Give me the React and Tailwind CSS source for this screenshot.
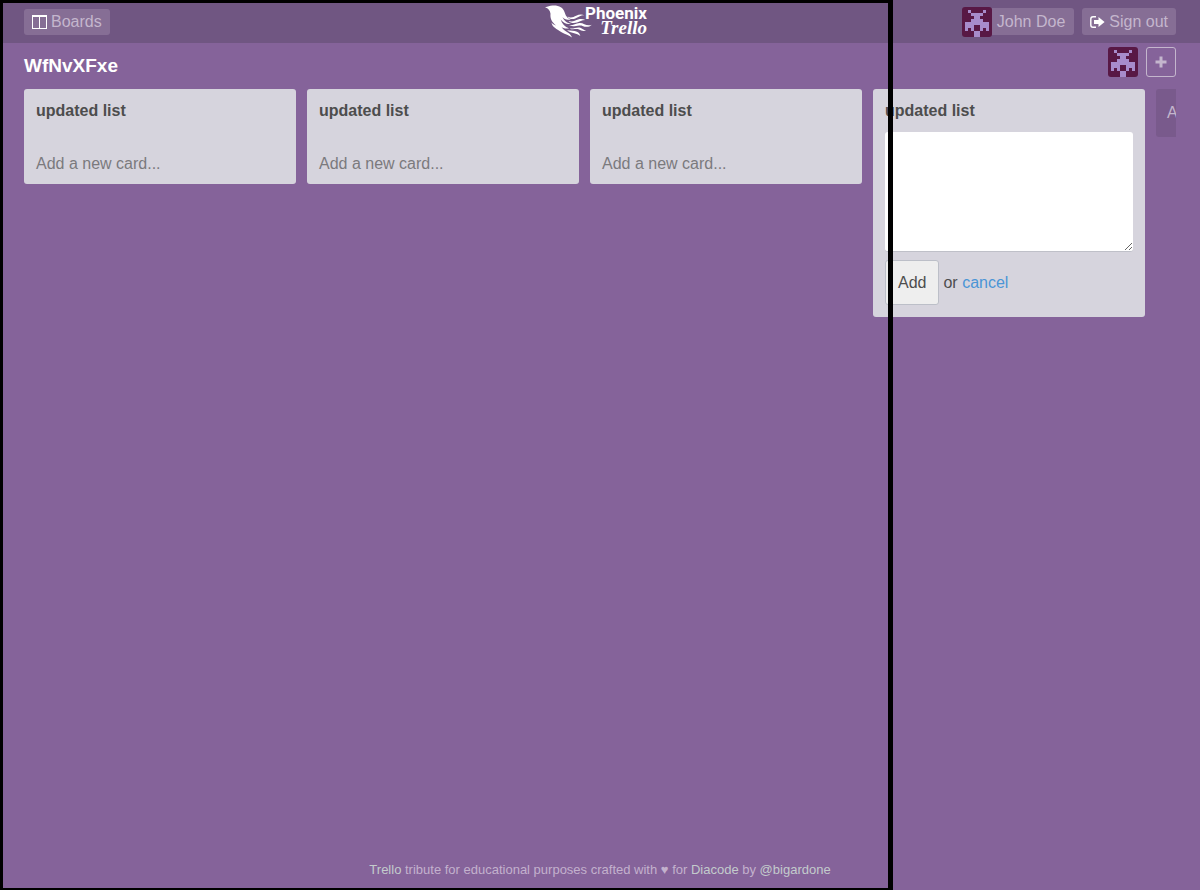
function Avatar() {
  const cells = [
    [2, 1, 1, 1], [7, 1, 1, 1],
    [3, 2, 4, 1],
    [4, 3, 2, 1],
    [3, 4, 4, 1],
    [2, 5, 1, 1], [4, 5, 2, 1], [7, 5, 1, 1],
    [1, 5, 3, 1], [6, 5, 3, 1],
    [1, 6, 3, 1], [6, 6, 3, 1],
    [1, 7, 1, 1], [3, 7, 1, 1], [6, 7, 1, 1], [8, 7, 1, 1],
    [4, 8, 2, 2],
  ];
  return (
    <svg viewBox="0 0 10 10" className="size-[30px] shrink-0 rounded-[3px] bg-[#581845]" shapeRendering="crispEdges" aria-hidden="true">
      {cells.map(([x, y, w, h], i) => (
        <rect key={i} x={x} y={y} width={w} height={h} fill="#a78bcb" />
      ))}
    </svg>
  );
}

function Columns() {
  return (
    <svg viewBox="0 0 15 14" className="h-[14px] w-[15px] shrink-0" fill="#fff" shapeRendering="crispEdges" aria-hidden="true">
      <path fillRule="evenodd" d="M0 0h15v14H0zM1 2v11h6V2zM8 2v11h6V2z" />
    </svg>
  );
}

function SignOut() {
  return (
    <svg viewBox="0 0 15 12" className="h-3 w-[15px] shrink-0" aria-hidden="true">
      <path d="M6 .7H3Q.8.7.8 3v6q0 2.3 2.2 2.3h3" fill="none" stroke="#fff" strokeWidth="1.4" />
      <path d="M4 4h4.500V1L14.600 6 8.500 11V8H4z" fill="#fff" />
    </svg>
  );
}

function Plus() {
  return (
    <svg viewBox="0 0 12 12" className="size-3" fill="currentColor" aria-hidden="true">
      <path d="M4.500 .5h3v4h4v3h-4v4h-3v-4h-4v-3h4z" />
    </svg>
  );
}

function Phoenix() {
  return (
    <svg viewBox="0 0 48 33" className="h-[33px] w-12 shrink-0" fill="#fff" aria-hidden="true">
      <path d="M0 2.200C3 1.800 4.500 .8 7.500 .6c6.500-.4 10.500 2 12 6.400 1.200 3.700 2.500 6.200 6.200 7.200-3.200 1.200-6.300.2-8.200-2.200 1.600 4.200 5 6.300 8.500 6.800-4 1-8-.8-10.300-4.200 1.200 4.400 4.300 7.400 8.300 8.700-2.600.7-5.400 0-7.500-1.400 1.800 3 4.500 4 7 6 2 1.500 2.800 2.700 3.500 4.700-3-3-6.800-3.300-10-5.200C11.500 24 7 22 6.500 17.500c1.500 1.800 3 2.600 4.700 3C6.500 17 5 13 5.500 8.700 5 5.500 3.500 3.200 0 2.200z" />
      <path d="M22.500 11.500c3.500 2 6 .4 8.700-.8 2.800-1.200 5.400-1.500 8.300-.4-4.500 0-6.300 2.200-9.200 3.300-3.200 1.100-6.300.4-7.800-2.100z" />
      <path d="M23.500 16c4 1.300 6.700-.5 9.500-1.400 2.600-.8 5-.6 7.300.4-3.800 0-5.500 1.700-8.300 2.600-3 .9-6.500.6-8.500-1.600z" />
      <path d="M24 20.200c4.200.6 6.500-2 10.500-2.200 4.500-.2 7 3.700 12.300 1.700-3 3-6.500 2.200-9.300 1.200-3.700-1.400-6.500 1.900-13.500-.7z" />
      <path d="M24.500 23.400c4 .7 7.300-1.600 10.800-.7 2.200.6 3.200 2.600 5.900 2.500-2.800 1.500-5 .2-7.200-.7-2.800-1.200-6.500.8-9.500-1.100z" />
      <path d="M22 25.200c4 .6 7.200 0 10 1.600 2 1.100 2.900 2.300 3.300 4.200-3.600-3.400-8.300-2.200-13.300-5.800z" />
    </svg>
  );
}

function List({ children }) {
  return (
    <section className="w-[272px] shrink-0 rounded-[3px] bg-[#d6d4dd] p-3">
      <h4 className="text-base leading-5 font-bold">updated list</h4>
      {children}
    </section>
  );
}

export default function App() {
  return (
    <div className="relative flex min-h-screen flex-col bg-[#85639a] font-['Liberation_Sans',Arial,sans-serif] text-base text-[#4d4d4d]">
      <header className="grid h-[43px] grid-cols-3 items-center bg-[#705682] px-6 text-[#c4b6cd]">
        <nav>
          <a href="#boards" className="inline-flex h-[26px] items-center gap-1 rounded-[3px] bg-[#866e95] px-2 align-middle">
            <Columns />
            Boards
          </a>
        </nav>
        <a href="#home" className="flex items-start justify-self-center pr-2 text-white">
          <Phoenix />
          <span className="-ml-2 flex flex-col items-end">
            <span className="font-['Roboto',sans-serif] text-[17px] leading-4 font-bold">Phoenix</span>
            <span className="font-['Liberation_Serif',serif] text-[19px] leading-[14px] font-bold italic">Trello</span>
          </span>
        </a>
        <div className="flex items-center gap-2 justify-self-end">
          <a href="#profile" className="flex items-center">
            <Avatar />
            <span className="flex h-[27px] items-center rounded-r-[3px] bg-[#866e95] pr-[9px] pl-[5px]">John Doe</span>
          </a>
          <button type="button" className="flex h-[27px] items-center gap-1 rounded-[3px] bg-[#866e95] px-2">
            <SignOut />
            Sign out
          </button>
        </div>
      </header>

      <main className="flex flex-1 flex-col px-6 pt-1">
        <div className="flex h-[42px] items-start justify-between">
          <h3 className="pt-[7px] text-[19px] leading-6 font-bold text-white">WfNvXFxe</h3>
          <div className="flex gap-2">
            <Avatar />
            <button type="button" aria-label="Add member" className="flex size-[30px] items-center justify-center rounded-[3px] border border-[#c4b6cd] text-[#c4b6cd]">
              <Plus />
            </button>
          </div>
        </div>
        <div className="flex items-start gap-[11px] overflow-hidden">
          {[1, 2, 3].map((id) => (
            <List key={id}>
              <a href="#new-card" className="mt-[35px] block leading-4 text-[#7b7a7d]">Add a new card...</a>
            </List>
          ))}
          <List>
            <form className="mt-[11px]">
              <textarea aria-label="Card text" className="block h-[120px] w-full resize rounded-[3px] border-b border-[#bfc0c8] bg-white p-2" />
              <div className="mt-2 flex items-center">
                <button type="button" className="h-[45px] rounded-[3px] border border-[#bcbfc8] bg-[#eeeeee] px-3">Add</button>
                <span className="pl-1">
                  or <a href="#cancel" className="text-[#4a95d6]">cancel</a>
                </span>
              </div>
            </form>
          </List>
          <button type="button" className="h-12 w-[272px] shrink-0 rounded-[3px] bg-[#795a8c] px-[11px] text-left text-[#c4b6cd]">
            Add new list...
          </button>
        </div>
      </main>

      <footer className="pb-3 text-center text-[13px] leading-4 text-[#c3b1cd]">
        <a href="#trello" className="text-[#c3cbcc]">Trello</a> tribute for educational purposes crafted with ♥ for{' '}
        <a href="#diacode" className="text-[#c3cbcc]">Diacode</a> by{' '}
        <a href="#author" className="text-[#c3cbcc]">@bigardone</a>
      </footer>

      <div className="pointer-events-none absolute inset-y-0 left-0 w-[893px] border-t-[3px] border-r-[5px] border-b-2 border-l-[3px] border-black" />
    </div>
  );
}
